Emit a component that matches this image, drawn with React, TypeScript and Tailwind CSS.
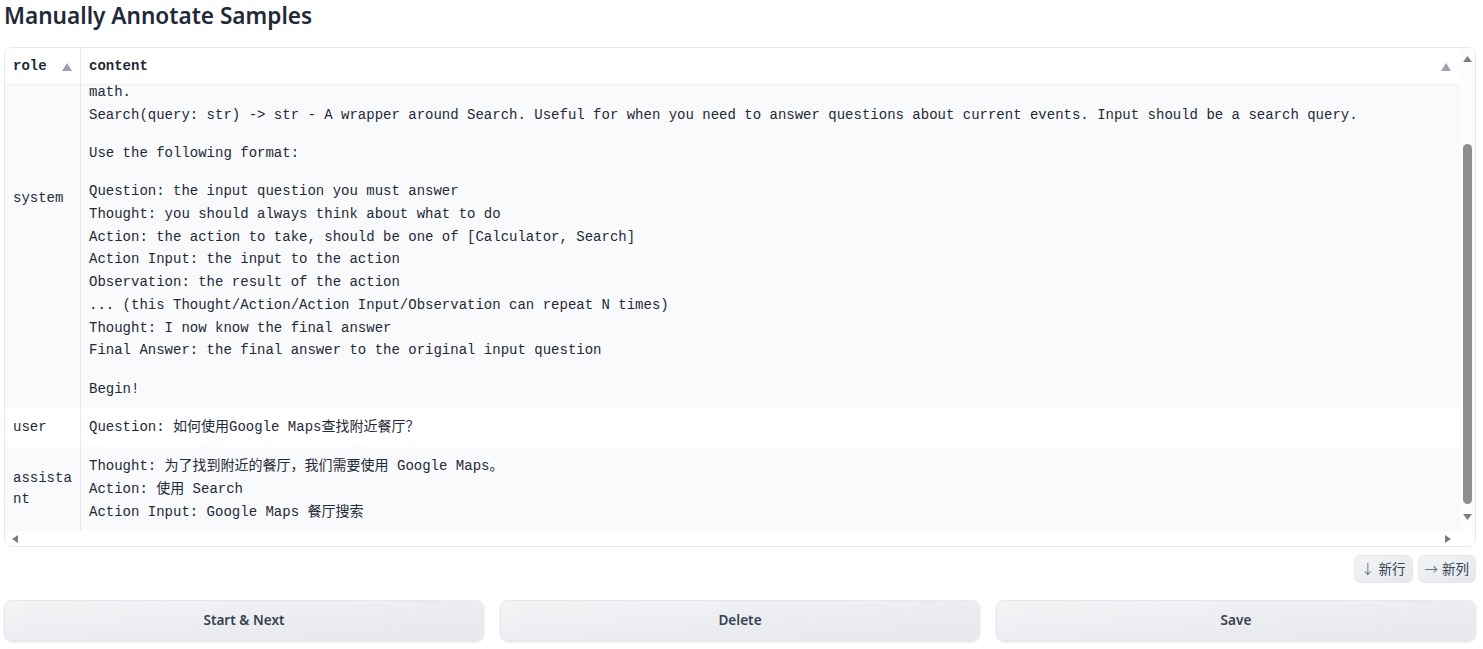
import React from 'react';

const MONO = "font-['Liberation_Mono','Noto_Sans_CJK_SC',monospace]";
const SANS = "font-['Noto_Sans','Noto_Sans_CJK_SC',sans-serif]";

// system prompt, split into paragraphs; the first ones are scrolled out of view
const SYSTEM_PARAS: string[][] = [
  ['Answer the following questions as best you can. You have access to the following tools:'],
  [
    'Calculator(query: str) -> str - Useful for when you need to answer questions about',
    'numbers, arithmetic, unit conversions and anything else that involves doing',
    'math.',
    'Search(query: str) -> str - A wrapper around Search. Useful for when you need to answer questions about current events. Input should be a search query.',
  ],
  ['Use the following format:'],
  [
    'Question: the input question you must answer',
    'Thought: you should always think about what to do',
    'Action: the action to take, should be one of [Calculator, Search]',
    'Action Input: the input to the action',
    'Observation: the result of the action',
    '... (this Thought/Action/Action Input/Observation can repeat N times)',
    'Thought: I now know the final answer',
    'Final Answer: the final answer to the original input question',
  ],
  ['Begin!'],
];

const ROWS = [
  { role: 'system', paras: SYSTEM_PARAS, bg: 'bg-[#f9fafb]', offset: '-mt-[96px]' },
  { role: 'user', paras: [['Question: 如何使用Google Maps查找附近餐厅？']], bg: 'bg-white', offset: '' },
  {
    role: 'assistant',
    paras: [['Thought: 为了找到附近的餐厅，我们需要使用 Google Maps。', 'Action: 使用 Search', 'Action Input: Google Maps 餐厅搜索']],
    bg: 'bg-[#f9fafb]',
    offset: '',
  },
];

function SortArrow() {
  return (
    <svg width="10" height="8" viewBox="0 0 10 8" className="shrink-0">
      <path d="M5 0 L10 8 L0 8 Z" fill="#9ca3af" />
    </svg>
  );
}

function Tri({ dir }: { dir: 'up' | 'down' | 'left' | 'right' }) {
  const d = {
    up: 'M4.5 0 L9 6 L0 6 Z',
    down: 'M0 0 L9 0 L4.5 6 Z',
    left: 'M0 4 L6 0 L6 8 Z',
    right: 'M0 0 L6 4 L0 8 Z',
  }[dir];
  const vertical = dir === 'up' || dir === 'down';
  return (
    <svg width={vertical ? 9 : 6} height={vertical ? 6 : 8} viewBox={vertical ? '0 0 9 6' : '0 0 6 8'} className="shrink-0">
      <path d={d} fill="#7d7d7d" />
    </svg>
  );
}

function Row({ role, paras, bg, offset }: (typeof ROWS)[number]) {
  return (
    <div className={`flex shrink-0 ${bg} ${offset}`}>
      <div className="w-[76px] shrink-0 border-r border-[#e5e7eb] px-2 py-[7px] flex items-center">
        <span className="break-all leading-[21px]">{role}</span>
      </div>
      <div className="flex-1 px-2 pt-[8px] pb-[8px] flex flex-col gap-[15.5px]">
        {paras.map((p, i) => (
          <div key={i}>
            {p.map((line, j) => (
              <div key={j} className="leading-[22.75px] whitespace-pre">{line}</div>
            ))}
          </div>
        ))}
      </div>
    </div>
  );
}

export default function App() {
  return (
    <div className={`w-[1483px] h-[649px] bg-white pl-[4px] pr-[7px] ${SANS} text-[#1f2937]`}>
      <h1 className="text-[22.6px] font-semibold leading-[31px] text-[#1f2937]">Manually Annotate Samples</h1>

      {/* dataframe */}
      <div className={`mt-[16px] h-[500px] border border-[#e5e7eb] rounded-lg overflow-hidden flex flex-col ${MONO} text-[14px] text-[#1f2937]`}>
        <div className="flex flex-1 min-h-0">
          <div className="flex-1 min-w-0 flex flex-col">
            <div className="h-[37px] shrink-0 flex bg-white border-b border-[#f0f0f0] font-bold pt-[1px]">
              <div className="w-[76px] shrink-0 border-r border-[#e5e7eb] px-2 flex items-center justify-between">
                <span>role</span>
                <SortArrow />
              </div>
              <div className="flex-1 pl-2 pr-[9px] flex items-center justify-between">
                <span>content</span>
                <SortArrow />
              </div>
            </div>
            <div className="flex-1 min-h-0 overflow-hidden flex flex-col">
              {ROWS.map(r => (
                <Row key={r.role} {...r} />
              ))}
              <div className="flex-1 flex">
                <div className="w-[76px] border-r border-[#e5e7eb]" />
              </div>
            </div>
          </div>
          {/* vertical scrollbar */}
          <div className="w-[15px] shrink-0 bg-[#fdfdfd] flex flex-col items-center">
            <div className="mt-[8px]"><Tri dir="up" /></div>
            <div className="mt-[82px] w-[9px] h-[360px] rounded-full bg-[#8f8f8f]" />
            <div className="mt-[10px]"><Tri dir="down" /></div>
          </div>
        </div>
        {/* horizontal scrollbar */}
        <div className="h-[15px] shrink-0 flex bg-white">
          <div className="flex-1 flex items-center justify-between pl-[7px] pr-[9px]">
            <Tri dir="left" />
            <Tri dir="right" />
          </div>
          <div className="w-[15px]" />
        </div>
      </div>

      <div className="mt-[8px] flex justify-end gap-[5px]">
        <button className="h-[28px] px-[6px] rounded-md border border-[#e5e7eb] bg-gradient-to-br from-[#f3f4f6] to-[#e5e7eb] text-[13.5px] text-[#374151] flex items-center gap-[4px]">
          <span className="text-[#6b7280]">↓</span>新行
        </button>
        <button className="h-[28px] px-[6px] rounded-md border border-[#e5e7eb] bg-gradient-to-br from-[#f3f4f6] to-[#e5e7eb] text-[13.5px] text-[#374151] flex items-center gap-[4px]">
          <span className="text-[#6b7280]">→</span>新列
        </button>
      </div>

      <div className="mt-[17px] grid grid-cols-3 gap-4">
        {['Start & Next', 'Delete', 'Save'].map(label => (
          <button
            key={label}
            className="h-[41px] rounded-lg border border-[#e5e7eb] bg-gradient-to-br from-[#f3f4f6] to-[#e5e7eb] shadow-sm text-[13.6px] font-semibold text-[#374151]"
          >
            {label}
          </button>
        ))}
      </div>
    </div>
  );
}
